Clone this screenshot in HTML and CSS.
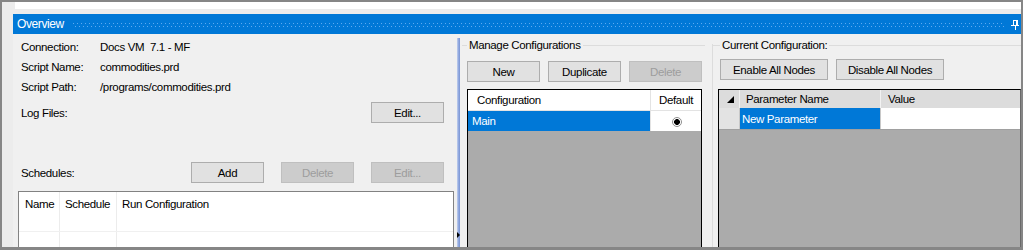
FILE: index.html
```html
<!DOCTYPE html>
<html lang="en">
<head>
    <meta charset="UTF-8">
    <title>Overview</title>
    <link rel="stylesheet" href="styles.css">
</head>
<body>
    <div class="frame">
        <div class="top-strip"></div>
        <div class="pane">
            <div class="pane-title">
                <span class="title-text">Overview</span>
                <span class="grip"></span>
                <svg class="pin" viewBox="0 0 8 10" width="8" height="10">
                    <rect x="2" y="0" width="1" height="6" fill="#fff"/>
                    <rect x="5" y="0" width="2" height="6" fill="#fff"/>
                    <rect x="2" y="0" width="5" height="1" fill="#fff"/>
                    <rect x="0" y="5" width="8" height="1" fill="#fff"/>
                    <rect x="4" y="6" width="1" height="4" fill="#fff"/>
                </svg>
            </div>
            <div class="pane-body">
                <div class="left">
                    <div class="info">
                        <div class="info-row"><span class="lbl">Connection:</span><span>Docs VM&nbsp; 7.1 - MF</span></div>
                        <div class="info-row"><span class="lbl">Script Name:</span><span>commodities.prd</span></div>
                        <div class="info-row"><span class="lbl">Script Path:</span><span>/programs/commodities.prd</span></div>
                    </div>
                    <div class="log-row">
                        <span>Log Files:</span>
                        <button class="btn">Edit...</button>
                    </div>
                    <div class="sched-row">
                        <span>Schedules:</span>
                        <div class="btn-group wide">
                            <button class="btn">Add</button>
                            <button class="btn" disabled>Delete</button>
                            <button class="btn" disabled>Edit...</button>
                        </div>
                    </div>
                    <div class="sched-grid">
                        <div class="sg-row sg-head">
                            <span class="sg-cell first">Name</span>
                            <span class="sg-cell">Schedule</span>
                            <span class="sg-cell">Run Configuration</span>
                        </div>
                        <div class="sg-row sg-item">
                            <span class="sg-cell"></span><span class="sg-cell"></span><span class="sg-cell"></span>
                        </div>
                        <div class="sg-row sg-item">
                            <span class="sg-cell"></span><span class="sg-cell"></span><span class="sg-cell"></span>
                        </div>
                    </div>
                </div>

                <div class="splitter">
                    <div class="split-bar"></div>
                    <span class="split-arrow"></span>
                </div>

                <div class="mid">
                    <div class="gb-title">Manage Configurations</div>
                    <div class="btn-group mid-btns">
                        <button class="btn">New</button>
                        <button class="btn">Duplicate</button>
                        <button class="btn" disabled>Delete</button>
                    </div>
                    <div class="cfg-grid">
                        <div class="cfg-row cfg-head">
                            <span class="cfg-name">Configuration</span>
                            <span class="cfg-def">Default</span>
                        </div>
                        <div class="cfg-row cfg-sel">
                            <span class="cfg-name">Main</span>
                            <span class="cfg-def"><span class="radio"></span></span>
                        </div>
                    </div>
                </div>

                <div class="right">
                    <div class="gb-title">Current Configuration:</div>
                    <div class="btn-group right-btns">
                        <button class="btn long">Enable All Nodes</button>
                        <button class="btn long">Disable All Nodes</button>
                    </div>
                    <div class="param-grid">
                        <div class="pg-row pg-head">
                            <span class="pg-rh"><span class="corner"></span></span>
                            <span class="pg-name">Parameter Name</span>
                            <span class="pg-val">Value</span>
                        </div>
                        <div class="pg-row pg-item">
                            <span class="pg-rh"></span>
                            <span class="pg-name">New Parameter</span>
                            <span class="pg-val"></span>
                        </div>
                    </div>
                </div>
            </div>
        </div>
    </div>
</body>
</html>
```

FILE: styles.css
```css
body {
    margin: 0;
    font-family: "Liberation Sans", Arial, sans-serif;
    font-size: 11.5px;
    letter-spacing: -0.35px;
    color: #000;
}
.frame {
    width: 1023px;
    height: 250px;
    box-sizing: border-box;
    border: 2px solid #868686;
    border-bottom-width: 3px;
    background: #ececec;
    display: flex;
    flex-direction: column;
    overflow: hidden;
}
.top-strip {
    flex: none;
    height: 7px;
    margin-left: 13px;
    background: #fff;
}
.pane {
    flex: 1;
    min-height: 0;
    margin: 5px 0 0 11px;
    display: flex;
    flex-direction: column;
}
.pane-title {
    flex: none;
    height: 20px;
    background: #0078d7;
    color: #fff;
    display: flex;
    align-items: center;
}
.title-text {
    padding-left: 4px;
    font-size: 12px;
    letter-spacing: -0.4px;
}
.grip {
    flex: 1;
    height: 4px;
    margin: 2px 7px 0 9px;
    background:
        linear-gradient(90deg, #5eaaf0 1px, transparent 1px) 0 0 / 4px 1px repeat-x,
        linear-gradient(90deg, #5eaaf0 1px, transparent 1px) 2px 3px / 4px 1px repeat-x;
}
.pin {
    flex: none;
    margin: 1px 2px 0 0;
}
.pane-body {
    flex: 1;
    min-height: 0;
    display: flex;
    background: #f0f0f0;
}

/* buttons */
.btn {
    width: 73px;
    height: 21px;
    box-sizing: border-box;
    padding: 0;
    border: 1px solid #adadad;
    background: #e1e1e1;
    font: inherit;
    letter-spacing: inherit;
    color: #000;
}
.btn:disabled {
    background: #cccccc;
    border-color: #bfbfbf;
    color: #9d9d9d;
}
.btn.long {
    width: 108px;
}
.btn-group {
    display: flex;
    gap: 8px;
}
.btn-group.wide {
    gap: 17px;
}

/* left side */
.left {
    flex: none;
    width: 443px;
    box-sizing: border-box;
    padding: 0 2px 0 5px;
    display: flex;
    flex-direction: column;
    overflow: hidden;
}
.info {
    padding: 3px 0 0 3px;
}
.info-row {
    display: flex;
    height: 20px;
    align-items: center;
}
.lbl {
    width: 79px;
}
.log-row,
.sched-row {
    display: flex;
    justify-content: space-between;
    align-items: center;
    padding: 0 10px 0 3px;
}
.log-row {
    margin-top: 5px;
}
.sched-row {
    margin-top: 39px;
}
.sched-grid {
    flex: 1;
    margin-top: 8px;
    border: 1px solid #828282;
    border-bottom: none;
    background: #fff;
}
.sg-row {
    display: grid;
    grid-template-columns: 41px 57px 1fr;
}
.sg-head {
    height: 24px;
    align-items: center;
}
.sg-item {
    height: 15px;
    border-bottom: 1px solid #f0f0f0;
}
.sg-cell {
    height: 100%;
    display: flex;
    align-items: center;
    padding-left: 5px;
    border-right: 1px solid #ececec;
}
.sg-cell.first {
    padding-left: 6px;
}
.sg-cell:last-child {
    border-right: none;
}

/* splitter */
.splitter {
    flex: none;
    position: relative;
    width: 5px;
    box-sizing: border-box;
    padding: 4px 0 0 1px;
}
.split-bar {
    width: 3px;
    height: 100%;
    background: linear-gradient(90deg, #c2d0ef, #8aa3dc 60%, #7b95d4);
}
.split-arrow {
    position: absolute;
    left: 1px;
    top: 198px;
    border-left: 3px solid #000;
    border-top: 3px solid transparent;
    border-bottom: 3px solid transparent;
}

/* group box captions */
.gb-title {
    display: flex;
    align-items: center;
    height: 20px;
    margin-top: 1px;
}
.gb-title::before,
.gb-title::after {
    content: "";
    height: 1px;
    background: #dcdcdc;
}
.gb-title::before {
    width: 5px;
    margin-right: 2px;
}
.gb-title::after {
    flex: 1;
    margin-left: 2px;
}

/* middle column */
.mid {
    flex: none;
    width: 251px;
    box-sizing: border-box;
    padding-left: 1px;
    display: flex;
    flex-direction: column;
}
.mid .gb-title {
    margin-right: 7px;
}
.mid-btns {
    margin-top: 6px;
    padding-left: 5px;
}
.cfg-grid {
    flex: 1;
    width: 235px;
    box-sizing: border-box;
    margin: 7px 0 0 5px;
    border: 1px solid #000;
    border-bottom: none;
    background: #ababab;
}
.cfg-row {
    display: grid;
    grid-template-columns: 183px 1fr;
    height: 20px;
}
.cfg-row > span {
    display: flex;
    align-items: center;
}
.cfg-head {
    height: 21px;
    background: #fff;
    box-sizing: border-box;
    border-bottom: 1px solid #e3e3e3;
}
.cfg-name {
    border-right: 1px solid #e3e3e3;
    padding-left: 9px;
}
.cfg-def {
    justify-content: center;
    background: #fff;
}
.cfg-sel .cfg-name {
    background: #0078d7;
    color: #fff;
    padding-left: 4px;
}
.radio {
    width: 10px;
    height: 10px;
    box-sizing: border-box;
    margin: 2px 0 0 1px;
    border: 1px solid #8f8f8f;
    border-radius: 50%;
    background: radial-gradient(circle, #000 2.6px, #fff 3.2px);
}

/* right column */
.right {
    flex: 1;
    padding-left: 1px;
    display: flex;
    flex-direction: column;
    background: linear-gradient(#dcdcdc, #dcdcdc) 0 10px / 1px 100% no-repeat;
}
.right .gb-title::before {
    width: 7px;
}
.right-btns {
    margin-top: 4px;
    padding-left: 7px;
}
.param-grid {
    flex: 1;
    margin: 9px 0 0 5px;
    border: 1px solid #000;
    border-right-color: #6a6a6a;
    border-bottom: none;
    background: #ababab;
}
.pg-row {
    display: grid;
    grid-template-columns: 21px 141px 1fr;
}
.pg-row > span {
    display: flex;
    align-items: center;
    box-sizing: border-box;
}
.pg-head {
    height: 18px;
    background: #dcdcdc;
}
.pg-head > span {
    border-right: 1px solid #f2f2f2;
}
.pg-head .pg-val {
    border-right: none;
}
.pg-rh {
    justify-content: center;
}
.corner {
    width: 0;
    height: 0;
    margin: 1px 0 0 2px;
    border-left: 7px solid transparent;
    border-bottom: 7px solid #000;
}
.pg-head .pg-name {
    padding-left: 6px;
}
.pg-head .pg-val {
    padding-left: 7px;
}
.pg-item {
    height: 21px;
    border-bottom: 1px solid #a0a0a0;
}
.pg-item .pg-rh {
    background: #e3e3e3;
    border-right: 1px solid #c8c8c8;
}
.pg-item .pg-name {
    background: #0078d7;
    color: #fff;
    padding-left: 2px;
    border-right: 1px solid #c8c8c8;
}
.pg-item .pg-val {
    background: #fff;
}
```
